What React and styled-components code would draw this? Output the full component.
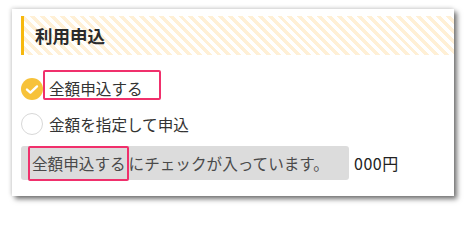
import styled, { createGlobalStyle } from 'styled-components'

const Global = createGlobalStyle`
    html, body {
        margin: 0;
        background: #fff;
    }
    body {
        font-family: "Noto Sans CJK JP", "Noto Sans", sans-serif;
        color: #333;
    }
    #root {
        padding: 9px 0 12px 12px;
    }
`

const Card = styled.div`
    width: 442px;
    height: 187px;
    box-sizing: border-box;
    padding: 7px 0 0 9px;
    background: #fff;
    box-shadow: 3px 3px 5px rgba(0, 0, 0, 0.55), -1px -1px 4px rgba(0, 0, 0, 0.15);
`

const Heading = styled.h2`
    margin: 0;
    height: 39px;
    box-sizing: border-box;
    display: flex;
    align-items: center;
    padding-left: 11px;
    border-left: 3px solid #f6b80e;
    background: repeating-linear-gradient(
        45deg,
        #fff 0 3.5px,
        #fff0d6 3.5px 7px
    );
    font-size: 17.5px;
    font-weight: 700;
    color: #2b2b2b;
`

const Options = styled.div`
    margin-top: 15px;
    display: flex;
    flex-direction: column;
`

const Row = styled.label`
    display: flex;
    align-items: center;
    height: ${({ $h }) => $h}px;
    margin-top: ${({ $mt }) => $mt || 0}px;
    font-size: 15.6px;
    color: #333;
`

const Radio = styled.span`
    flex: none;
    width: 22px;
    height: 22px;
    box-sizing: border-box;
    border-radius: 50%;
    display: flex;
    align-items: center;
    justify-content: center;
    margin-top: ${({ $checked }) => ($checked ? 8 : 0)}px;
    background: ${({ $checked }) => ($checked ? '#f7c23a' : '#fff')};
    border: ${({ $checked }) => ($checked ? 'none' : '1px solid #d8d8d8')};
`

const Marked = styled.span`
    display: flex;
    align-items: center;
    height: 30px;
    box-sizing: border-box;
    padding: 5px 16px 0 4px;
    border: 2px solid #f0306c;
    border-radius: 2px;
`

const Plain = styled.span`
    padding-left: 6px;
`

const FieldRow = styled.div`
    margin-top: 8px;
    display: flex;
    align-items: center;
`

const Field = styled.div`
    width: 328px;
    height: 34px;
    box-sizing: border-box;
    display: flex;
    align-items: center;
    padding-left: 7px;
    background: #dcdcdc;
    border-radius: 3px;
    font-size: 15.6px;
    color: #4a4a4a;
    white-space: nowrap;
`

const FieldMark = styled.span`
    display: flex;
    align-items: center;
    height: 35px;
    box-sizing: border-box;
    padding: 0 1px 0 2px;
    border: 2px solid #f0306c;
    border-radius: 2px;
`

const Amount = styled.span`
    margin-left: 5px;
    font-size: 16px;
    letter-spacing: 0.5px;
    color: #222;
`

const Check = () => (
    <svg width="14" height="11" viewBox="0 0 14 11">
        <path d="M2 5.6 L5.4 8.6 L12 2.4" fill="none" stroke="#fff" strokeWidth="2.4" strokeLinecap="round" strokeLinejoin="round" />
    </svg>
)

const App = () => (
    <>
        <Global />
        <Card>
            <Heading>利用申込</Heading>
            <Options>
                <Row $h={30}>
                    <Radio $checked><Check /></Radio>
                    <Marked>全額申込する</Marked>
                </Row>
                <Row $h={28} $mt={10}>
                    <Radio />
                    <Plain>金額を指定して申込</Plain>
                </Row>
            </Options>
            <FieldRow>
                <Field>
                    <FieldMark>全額申込する</FieldMark>
                    にチェックが入っています。
                </Field>
                <Amount>000円</Amount>
            </FieldRow>
        </Card>
    </>
)

export default App
